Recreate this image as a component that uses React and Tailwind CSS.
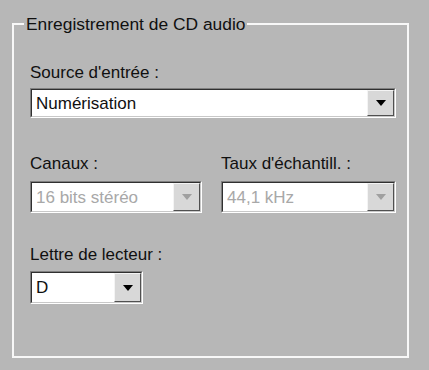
import React from 'react';

function Combo({ value, disabled, className }) {
  return (
    <div className={`flex border-t border-l border-b border-r border-t-[#808080] border-l-[#808080] border-b-white border-r-white ${className}`}>
      <div className="flex flex-1 items-center border-t border-l border-b border-r border-t-[#303030] border-l-[#303030] border-b-[#c8c8c8] border-r-[#c8c8c8] bg-white">
        <span className={`flex-1 pl-[4px] text-[17px] leading-none ${disabled ? 'text-[#a8a8a8]' : 'text-[#101010]'}`}>{value}</span>
        <div className="flex h-full w-[27px] items-center justify-center border-t border-l border-b border-r border-t-[#f4f4f4] border-l-[#f4f4f4] border-b-[#505050] border-r-[#505050] bg-[#d8d8d8]">
          <svg width="10" height="6" viewBox="0 0 10 6">
            <path d="M0 0 H10 L5 6 Z" fill={disabled ? '#a0a0a0' : '#000'} />
          </svg>
        </div>
      </div>
    </div>
  );
}

export default function App() {
  return (
    <div className="h-[370px] w-[429px] overflow-hidden bg-[#b7b7b7] pt-[14px] pl-[12px]" style={{ fontFamily: '"Liberation Sans", Arial, sans-serif' }}>
      <fieldset className="h-[344px] w-[397px] border-t-2 border-l-2 border-b-2 border-r-2 border-t-[#f8f8f8] border-l-[#f8f8f8] border-b-[#f8f8f8] border-r-[#f8f8f8] pl-[16px] pr-[10px]">
        <legend className="-ml-[6px] px-[2px] text-[17.4px] leading-[20px] text-[#101010]">Enregistrement de CD audio</legend>
        <div className="mt-[29px] text-[17px] leading-[20px] text-[#101010]">Source d'entrée :</div>
        <Combo value="Numérisation" className="mt-[5px] h-[30px] w-[366px]" />
        <div className="mt-[36px] flex gap-[19px]">
          <div className="flex flex-col">
            <span className="text-[17px] leading-[20px] text-[#101010]">Canaux :</span>
            <Combo value="16 bits stéréo" disabled className="mt-[7px] h-[32px] w-[172px]" />
          </div>
          <div className="flex flex-col">
            <span className="text-[17px] leading-[20px] text-[#101010]">Taux d'échantill. :</span>
            <Combo value="44,1 kHz" disabled className="mt-[7px] h-[32px] w-[175px]" />
          </div>
        </div>
        <div className="mt-[32px] text-[17px] leading-[20px] text-[#101010]">Lettre de lecteur :</div>
        <Combo value="D" className="mt-[6px] h-[33px] w-[113px]" />
      </fieldset>
    </div>
  );
}
